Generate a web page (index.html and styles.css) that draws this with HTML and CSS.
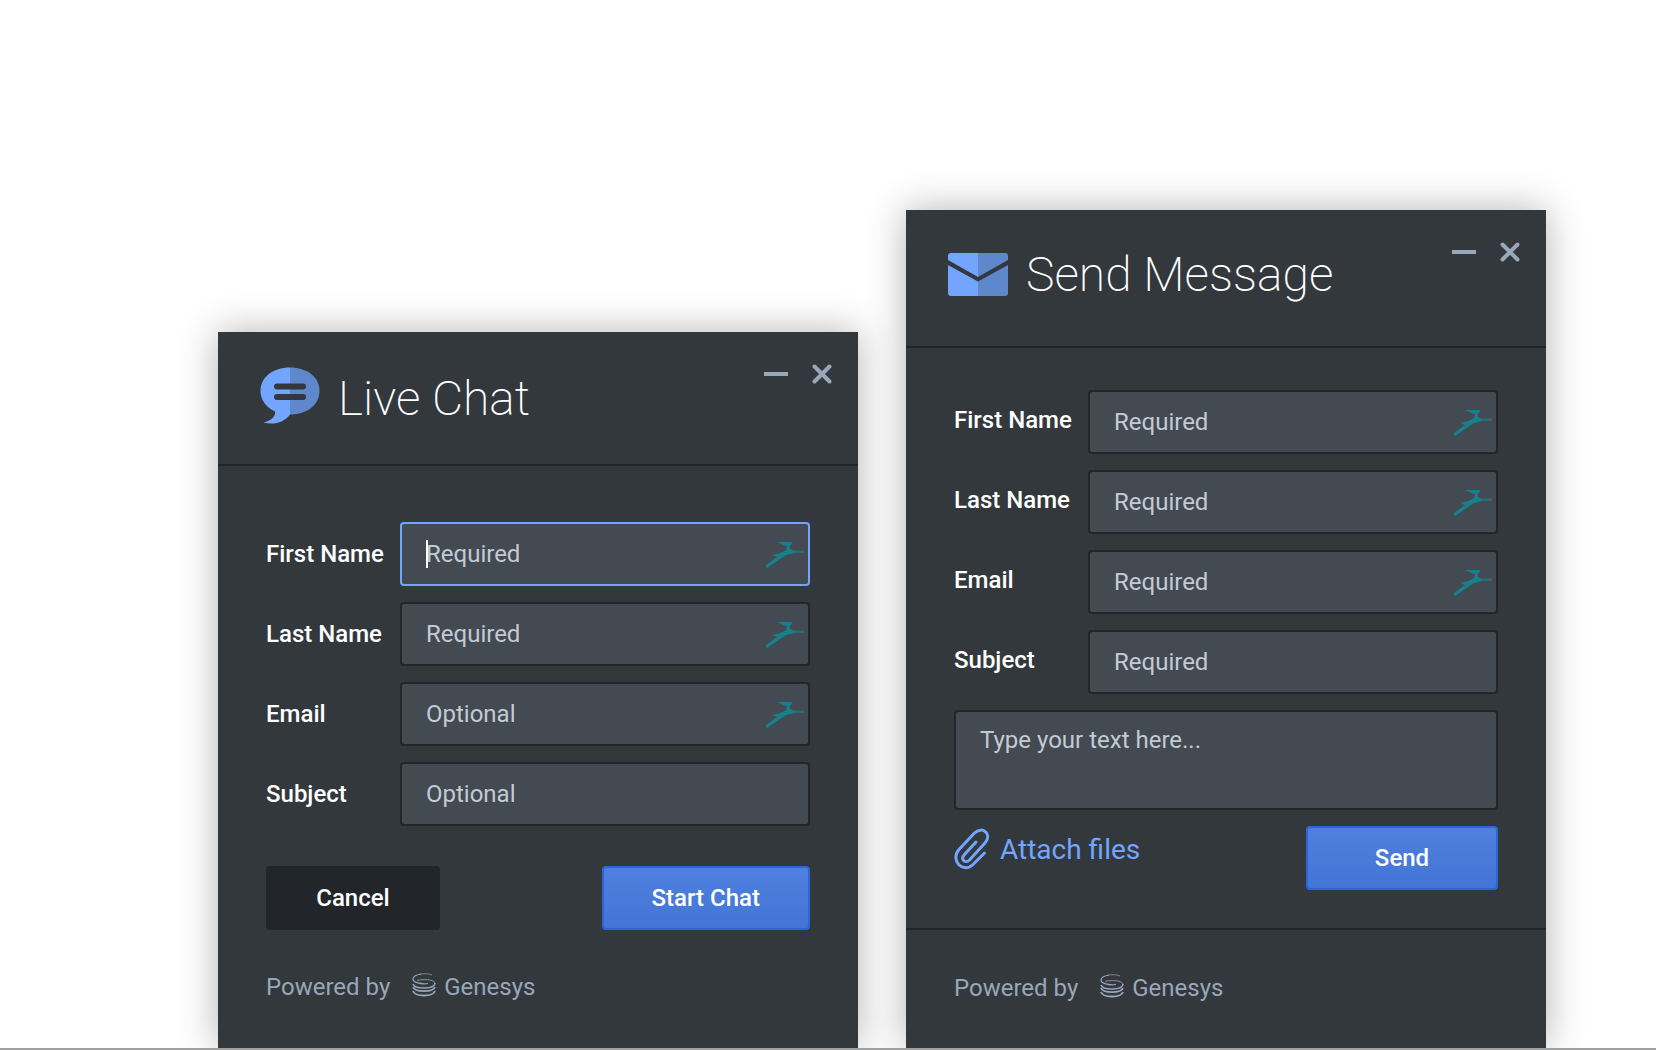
FILE: index.html
```html
<!DOCTYPE html>
<html lang="en">
<head>
  <meta charset="UTF-8" />
  <meta name="viewport" content="width=device-width, initial-scale=1" />
  <title>Live Chat and Send Message</title>
  <link rel="stylesheet" href="styles.css">
</head>
<body>
  <!-- shared icons -->
  <svg class="sprite" aria-hidden="true">
    <symbol id="icon-bird" viewBox="0 0 38 26">
      <path d="M38 8.500C32 9 28 8 23 9L20 11L38 11Z" fill="#2b6d7b" />
      <path d="M11 0H26L25.500 2.500L23.500 4L24 7L27 8.500L27 11.500C21 12 17 14.500 14 17L2 25.500L0 26V23L11 15L6 12.500C12 12.500 16 10.500 20 8L21 4.500L15 2Z" fill="#16808f" />
    </symbol>
    <symbol id="icon-close" viewBox="0 0 20 20">
      <path d="M2.500 2.500L17.500 17.500M17.500 2.500L2.500 17.500" stroke="currentColor" stroke-width="4" stroke-linecap="round" />
    </symbol>
    <symbol id="icon-genesys" viewBox="0 0 24 24">
      <g fill="none" stroke="currentColor">
        <path d="M20 2C17 .5 12 .5 8 1.200" stroke-width=".7" />
        <path d="M9 1C3 2 1 4 1 6C1 9.500 9 11.500 16 10.500" stroke-width="1.200" />
        <path d="M5 7.500C10 6 23 6 23 10.500" stroke-width=".8" />
        <path d="M23 10C23 16.500 3 16.500 1 11" stroke-width="1.500" />
        <path d="M1 14C3 19.500 21 19.500 23 14" stroke-width="1.800" />
        <path d="M1 18C3 24 21 24 23 18" stroke-width="1.800" />
      </g>
    </symbol>
  </svg>

  <main class="page">
    <section class="widget chat">
      <header class="widget-header">
        <svg class="logo" viewBox="0 0 60 60">
          <path d="M30 1.500C13 1.500 .5 11 .5 25C.5 34 6 41 15 45.500C16 50 11 55 3.500 56.500C14 59.500 25 56 30 48.500Z" fill="#74a5fe" />
          <path d="M30 1.500C47 1.500 59.500 11 59.500 25C59.500 39 47 48.500 30 48.500Z" fill="#5e87cc" />
          <path d="M17 20.500H43M17 31H43" stroke="#33383d" stroke-width="6" stroke-linecap="round" />
        </svg>
        <h2>Live Chat</h2>
        <div class="controls">
          <button class="minimize" aria-label="Minimize"></button>
          <button class="close" aria-label="Close"><svg><use href="#icon-close" /></svg></button>
        </div>
      </header>
      <form class="form">
        <div class="field">
          <label for="chatFirst">First Name</label>
          <div class="input-wrap">
            <input type="text" id="chatFirst" class="active" placeholder="Required" autocomplete="off" />
            <span class="caret"></span>
            <svg class="bird"><use href="#icon-bird" /></svg>
          </div>
        </div>
        <div class="field">
          <label for="chatLast">Last Name</label>
          <div class="input-wrap">
            <input type="text" id="chatLast" placeholder="Required" autocomplete="off" />
            <svg class="bird"><use href="#icon-bird" /></svg>
          </div>
        </div>
        <div class="field">
          <label for="chatEmail">Email</label>
          <div class="input-wrap">
            <input type="email" id="chatEmail" placeholder="Optional" autocomplete="off" />
            <svg class="bird"><use href="#icon-bird" /></svg>
          </div>
        </div>
        <div class="field">
          <label for="chatSubject">Subject</label>
          <div class="input-wrap">
            <input type="text" id="chatSubject" placeholder="Optional" autocomplete="off" />
          </div>
        </div>
        <div class="actions">
          <button type="button" class="btn">Cancel</button>
          <button type="button" class="btn primary">Start Chat</button>
        </div>
      </form>
      <footer class="widget-footer">
        <span>Powered by</span>
        <svg class="genesys"><use href="#icon-genesys" /></svg>
        <span>Genesys</span>
      </footer>
    </section>

    <section class="widget message">
      <header class="widget-header">
        <svg class="logo" viewBox="0 0 60 60">
          <path d="M30 9H3Q0 9 0 12V16L30 33Z" fill="#74a5fe" />
          <path d="M0 21L30 37.500V52H3Q0 52 0 49Z" fill="#74a5fe" />
          <path d="M30 9H57Q60 9 60 12V16L30 33Z" fill="#5e87cc" />
          <path d="M60 21L30 37.500V52H57Q60 52 60 49Z" fill="#5e87cc" />
        </svg>
        <h2>Send Message</h2>
        <div class="controls">
          <button class="minimize" aria-label="Minimize"></button>
          <button class="close" aria-label="Close"><svg><use href="#icon-close" /></svg></button>
        </div>
      </header>
      <form class="form">
        <div class="field">
          <label for="msgFirst">First Name</label>
          <div class="input-wrap">
            <input type="text" id="msgFirst" placeholder="Required" autocomplete="off" />
            <svg class="bird"><use href="#icon-bird" /></svg>
          </div>
        </div>
        <div class="field">
          <label for="msgLast">Last Name</label>
          <div class="input-wrap">
            <input type="text" id="msgLast" placeholder="Required" autocomplete="off" />
            <svg class="bird"><use href="#icon-bird" /></svg>
          </div>
        </div>
        <div class="field">
          <label for="msgEmail">Email</label>
          <div class="input-wrap">
            <input type="email" id="msgEmail" placeholder="Required" autocomplete="off" />
            <svg class="bird"><use href="#icon-bird" /></svg>
          </div>
        </div>
        <div class="field">
          <label for="msgSubject">Subject</label>
          <div class="input-wrap">
            <input type="text" id="msgSubject" placeholder="Required" autocomplete="off" />
          </div>
        </div>
        <textarea aria-label="Message" placeholder="Type your text here..."></textarea>
        <div class="actions">
          <button type="button" class="attach">
            <svg viewBox="0 0 36 42" fill="none" stroke="currentColor" stroke-width="3" stroke-linecap="round" stroke-linejoin="round">
              <path d="M22 14L10.500 26.500C6 31.500 11.500 36 15.500 32L31 15C39 6 28 -2.500 20.500 5L5 21.500C-4.500 32.500 9.500 46 19 36.500L30.500 25" />
            </svg>
            Attach files
          </button>
          <button type="button" class="btn primary">Send</button>
        </div>
      </form>
      <footer class="widget-footer">
        <span>Powered by</span>
        <svg class="genesys"><use href="#icon-genesys" /></svg>
        <span>Genesys</span>
      </footer>
    </section>
  </main>
</body>
</html>
```
FILE: styles.css
```css
* { box-sizing: border-box; }
body { margin: 0; min-height: 100vh; display: flex; flex-direction: column; background: #fff; font-family: Roboto, sans-serif; font-size: 24px; border-bottom: 2px solid #a0a0a0; }
.sprite { display: none; }
.page { flex: 1; display: flex; justify-content: flex-end; align-items: flex-end; gap: 48px; padding: 40px 110px 0 40px; overflow: hidden; }

.widget { width: 100%; max-width: 640px; background: #33383c; color: #fff; box-shadow: 0 0 36px rgba(0,0,0,0.3); }
.widget-header { display: flex; align-items: flex-start; padding: 34px 26px 36px 42px; border-bottom: 2px solid #222529; }
.logo { width: 60px; height: 60px; flex: none; }
.widget-header h2 { margin: 0 0 0 18px; font-size: 48px; line-height: 62px; font-weight: 200; flex: 1; }
.chat .widget-header h2 { padding-top: 2px; margin-bottom: -2px; }
.message .widget-header { padding-bottom: 40px; }

.controls { display: flex; align-items: center; gap: 24px; height: 16px; }
.controls button { padding: 0; border: none; background: none; color: #98a7b9; cursor: pointer; }
.minimize { width: 24px; height: 20px; display: flex; align-items: center; }
.minimize::before { content: ""; width: 24px; height: 4px; background: #98a7b9; }
.close { width: 20px; height: 20px; }
.close svg { display: block; width: 20px; height: 20px; }

.form { padding: 56px 48px 38px; display: flex; flex-direction: column; gap: 16px; }
.message .form { padding-top: 42px; }
.field { display: flex; align-items: center; }
.field label { width: 134px; flex: none; font-weight: 500; line-height: 32px; }
.message .field label { padding-bottom: 4px; }
.input-wrap { flex: 1; position: relative; }
input, textarea { display: block; width: 100%; height: 64px; padding: 0 24px; border: 2px solid #222529; border-radius: 4px; background: #444a52; color: #fff; font: 24px/28px Roboto, sans-serif; outline: none; }
input::placeholder, textarea::placeholder { color: #c3cad5; opacity: 1; }
input.active { border-color: #74a5fe; }
textarea { height: 100px; padding-top: 14px; resize: none; }
.bird { position: absolute; right: 6px; top: 20px; width: 38px; height: 26px; }
.caret { position: absolute; left: 26px; top: 18px; width: 2px; height: 28px; background: #fff; }

.actions { display: flex; justify-content: space-between; align-items: flex-start; }
.chat .actions { margin-top: 24px; }
.btn { height: 64px; min-width: 174px; padding: 0 48px; border: 2px solid #222529; border-radius: 4px; background: #222529; color: #fff; font: 500 24px Roboto, sans-serif; cursor: pointer; }
.btn.primary { min-width: 192px; border-color: #2b66d9; background: linear-gradient(#5080de, #4275d7); }
.attach { display: flex; align-items: center; gap: 10px; padding: 2px 0; border: none; background: none; color: #74a5fe; font: 28px Roboto, sans-serif; cursor: pointer; }
.attach svg { width: 36px; height: 42px; }

.widget-footer { display: flex; align-items: center; height: 120px; padding: 0 48px 2px; color: #98a7b9; }
.chat .widget-footer { height: 80px; padding-bottom: 42px; }
.message .widget-footer { border-top: 2px solid #222529; }
.genesys { width: 24px; height: 24px; margin: 0 8px 4px 22px; }
```
